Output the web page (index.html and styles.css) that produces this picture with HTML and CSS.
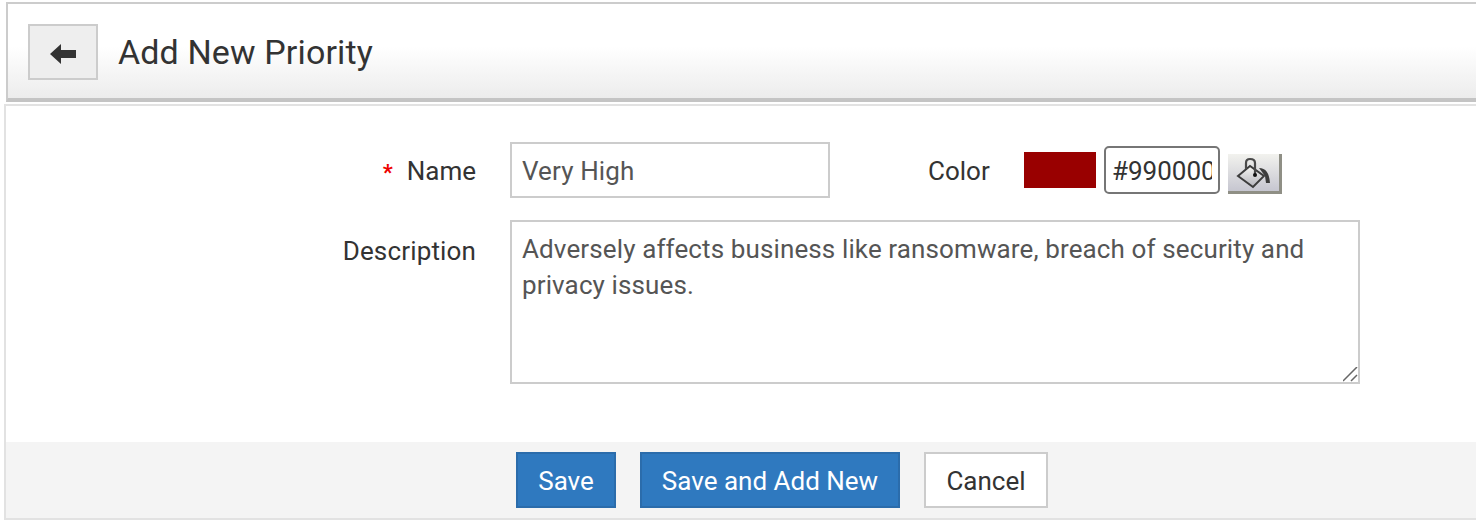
FILE: index.html
```html
<!DOCTYPE html>
<html lang="en">
<head>
    <meta charset="UTF-8">
    <meta name="viewport" content="width=device-width, initial-scale=1.0">
    <title>Add New Priority</title>
    <link rel="stylesheet" href="styles.css">
</head>
<body>
    <div class="page-header">
        <button class="back-button" type="button" aria-label="Back">
            <svg width="26" height="20" viewBox="0 0 26 20"><path d="M0 10 L11 0 L11 6 L26 6 L26 14 L11 14 L11 20 Z" fill="#333"/></svg>
        </button>
        <h1 class="page-title">Add New Priority</h1>
    </div>
    <div class="panel">
        <form class="priority-form">
            <div class="form-row name-row">
                <label class="form-label" for="name"><span class="required">*</span>Name</label>
                <input class="text-field name-field" type="text" id="name" value="Very High">
                <label class="color-label" for="color">Color</label>
                <span class="color-swatch"></span>
                <input class="color-field" type="text" id="color" value="#990000">
                <button class="picker-button" type="button" aria-label="Pick color">
                    <svg width="38" height="32" viewBox="0 0 38 32">
                        <defs>
                            <linearGradient id="paint" x1="0" y1="0" x2="0" y2="1">
                                <stop offset="0" stop-color="#f6f6f2"/>
                                <stop offset="1" stop-color="#b4b4bc"/>
                            </linearGradient>
                        </defs>
                        <path d="M3 19 L15 9 L29 19 L18 30 Z" fill="url(#paint)" stroke="#3c3c3c" stroke-width="2"/>
                        <path d="M11 12 L11 6 Q11 2 15 2 Q20 2 20 6 L20 18" fill="none" stroke="#4a4a4a" stroke-width="2.2"/>
                        <circle cx="20" cy="18" r="2" fill="#111"/>
                        <path d="M24 11 Q34 11 35 26 L31 26 L30 19 Z" fill="#3c3c3c"/>
                    </svg>
                </button>
            </div>
            <div class="form-row description-row">
                <label class="form-label description-label" for="description">Description</label>
                <textarea class="text-field description-field" id="description">Adversely affects business like ransomware, breach of security and privacy issues.</textarea>
            </div>
        </form>
        <div class="form-actions">
            <button class="btn btn-primary save-button" type="button">Save</button>
            <button class="btn btn-primary save-new-button" type="button">Save and Add New</button>
            <button class="btn btn-default cancel-button" type="button">Cancel</button>
        </div>
    </div>
</body>
</html>
```

FILE: styles.css
```css
* {
    box-sizing: border-box;
}

body {
    font-family: Roboto, "Liberation Sans", sans-serif;
    font-size: 26px;
    color: #333;
    margin: 0;
    padding: 2px 0 0;
    background-color: white;
}

.page-header {
    display: flex;
    align-items: center;
    height: 100px;
    margin-left: 6px;
    padding: 2px 0 0 20px;
    gap: 20px;
    border-top: 2px solid #ccc;
    border-left: 2px solid #ccc;
    border-bottom: 4px solid #c4c4c4;
    background: linear-gradient(to bottom, #fff 0%, #fff 45%, #ececec 100%);
}

.back-button {
    display: flex;
    align-items: center;
    justify-content: center;
    width: 70px;
    height: 56px;
    padding: 3px 0 0;
    background-color: #eee;
    border: 2px solid #ccc;
}

.page-title {
    margin: 0;
    font-size: 34px;
    font-weight: 400;
    letter-spacing: 0.13px;
}

.panel {
    margin-top: 2px;
    margin-left: 4px;
    border-top: 2px solid #e2e2e2;
    border-left: 2px solid #e2e2e2;
    border-bottom: 2px solid #e2e2e2;
}

.priority-form {
    padding-top: 36px;
    height: 336px;
}

.form-row {
    display: flex;
    align-items: center;
}

.description-row {
    align-items: flex-start;
    margin-top: 22px;
}

.form-label {
    width: 470px;
    margin-right: 34px;
    padding-top: 2px;
    text-align: right;
}

.description-label {
    padding-top: 16px;
    letter-spacing: 0.15px;
}

.required {
    color: #e00;
    font-size: 22px;
    font-weight: 700;
    margin-right: 14px;
}

.text-field {
    font-family: inherit;
    font-size: 26px;
    color: #555;
    padding: 2px 10px 0;
    border: 2px solid #ccc;
    border-radius: 0;
    background-color: white;
    outline: none;
    letter-spacing: 0.12px;
}

.name-field {
    width: 320px;
    height: 56px;
}

.description-field {
    display: block;
    width: 850px;
    height: 164px;
    padding: 9px 10px;
    line-height: 36px;
}

.description-field::-webkit-resizer {
    background: url("data:image/svg+xml,%3Csvg xmlns='http://www.w3.org/2000/svg' width='15' height='15'%3E%3Cpath d='M0 14 L14 0 M8 14 L14 8' stroke='%23666' stroke-width='1.5'/%3E%3C/svg%3E") no-repeat;
}

.color-label {
    margin-left: 98px;
    padding-top: 2px;
    width: 96px;
}

.color-swatch {
    width: 72px;
    height: 36px;
    background-color: #990000;
}

.color-field {
    width: 116px;
    height: 48px;
    margin-left: 8px;
    padding: 2px 6px 0;
    font-family: inherit;
    font-size: 26px;
    color: #333;
    border: 2px solid #767676;
    border-radius: 5px;
    outline: none;
}

.picker-button {
    display: flex;
    align-items: center;
    justify-content: center;
    width: 54px;
    height: 40px;
    margin-left: 8px;
    margin-top: 8px;
    padding: 0;
    border: 0;
    border-right: 3px solid #8f8f85;
    border-bottom: 3px solid #8f8f85;
    background: linear-gradient(to bottom, #f2f2ee, #c6c6d0);
}

.form-actions {
    display: flex;
    gap: 24px;
    height: 76px;
    padding: 10px 0 10px 510px;
    background-color: #f4f4f4;
}

.btn {
    height: 56px;
    padding: 2px 0 0;
    font-family: inherit;
    font-size: 26px;
}

.btn-primary {
    color: white;
    background-color: #2f79bf;
    border: 2px solid #2b6cab;
}

.btn-default {
    color: #333;
    background-color: white;
    border: 2px solid #ccc;
}

.save-button {
    width: 100px;
}

.save-new-button {
    width: 260px;
}

.cancel-button {
    width: 124px;
}
```
